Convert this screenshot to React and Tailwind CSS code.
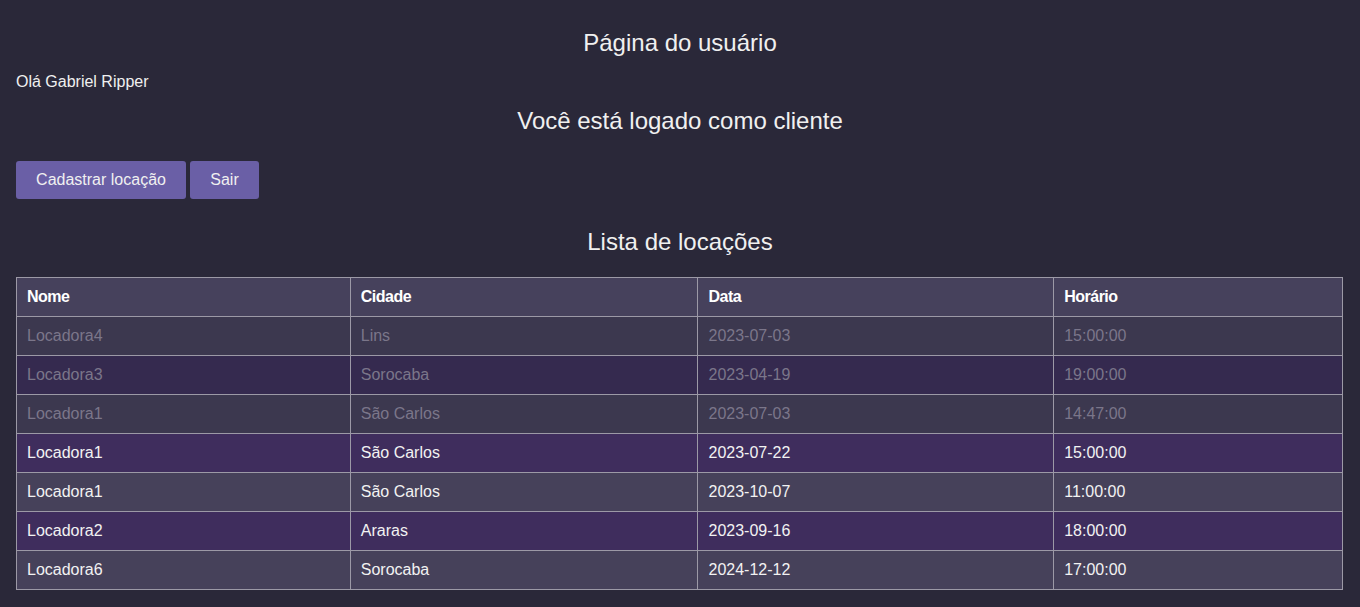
import React from "react";

const rows = [
  { n: "Locadora4", c: "Lins", d: "2023-07-03", h: "15:00:00", past: true },
  { n: "Locadora3", c: "Sorocaba", d: "2023-04-19", h: "19:00:00", past: true },
  { n: "Locadora1", c: "São Carlos", d: "2023-07-03", h: "14:47:00", past: true },
  { n: "Locadora1", c: "São Carlos", d: "2023-07-22", h: "15:00:00", past: false },
  { n: "Locadora1", c: "São Carlos", d: "2023-10-07", h: "11:00:00", past: false },
  { n: "Locadora2", c: "Araras", d: "2023-09-16", h: "18:00:00", past: false },
  { n: "Locadora6", c: "Sorocaba", d: "2024-12-12", h: "17:00:00", past: false },
];

function rowClass(i, past) {
  const purple = i % 2 === 1;
  if (past) return purple ? "bg-[#352a4f] text-[#7b768a]" : "bg-[#3c384f] text-[#7b768a]";
  return purple ? "bg-[#3f2d5d] text-[#f2f2f2]" : "bg-[#46415a] text-[#f2f2f2]";
}

export default function App() {
  return (
    <div className="min-h-[607px] bg-[#2a2839] text-[#f0f0f0] font-['Liberation_Sans',Arial,sans-serif] px-4 pt-[29px] pb-4">
      <h1 className="text-center text-[24px] leading-[28px]">Página do usuário</h1>
      <p className="mt-[16px] text-[16px] leading-[18px]">Olá Gabriel Ripper</p>
      <h2 className="mt-[16px] text-center text-[24px] leading-[28px]">Você está logado como cliente</h2>
      <div className="mt-[26px] flex gap-1">
        <button className="h-[38px] w-[170px] rounded-[3px] bg-[#6a5fa6] text-[16px] text-[#f0f0f0]">Cadastrar locação</button>
        <button className="h-[38px] w-[69px] rounded-[3px] bg-[#6a5fa6] text-[16px] text-[#f0f0f0]">Sair</button>
      </div>
      <h2 className="mt-[29px] text-center text-[24px] leading-[28px]">Lista de locações</h2>
      <table className="mt-[21px] w-[1327px] border-collapse text-[16px] leading-[18px]">
        <colgroup>
          <col className="w-[334px]" />
          <col className="w-[348px]" />
          <col className="w-[356px]" />
          <col className="w-[289px]" />
        </colgroup>
        <thead>
          <tr className="bg-[#46415c] text-white">
            {["Nome", "Cidade", "Data", "Horário"].map((h) => (
              <th key={h} className="h-[39px] border border-[#9c99a6] px-[10px] text-left font-bold tracking-[-0.5px]">{h}</th>
            ))}
          </tr>
        </thead>
        <tbody>
          {rows.map((r, i) => (
            <tr key={i} className={rowClass(i, r.past)}>
              <td className="h-[39px] border border-[#9c99a6] px-[10px]">{r.n}</td>
              <td className="h-[39px] border border-[#9c99a6] px-[10px]">{r.c}</td>
              <td className="h-[39px] border border-[#9c99a6] px-[10px]">{r.d}</td>
              <td className="h-[39px] border border-[#9c99a6] px-[10px]">{r.h}</td>
            </tr>
          ))}
        </tbody>
      </table>
    </div>
  );
}
